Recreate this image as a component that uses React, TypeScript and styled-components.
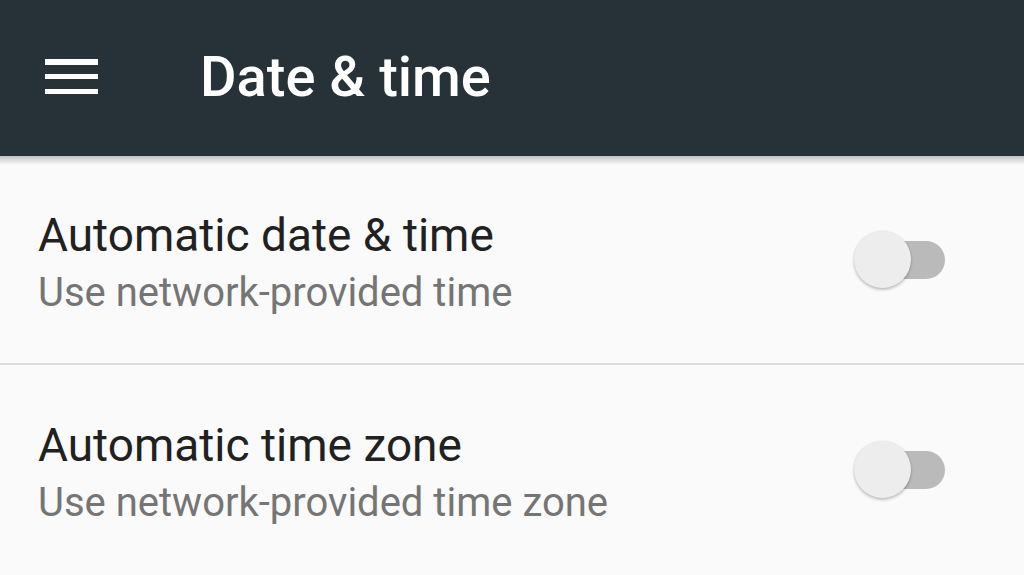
import React from "react";
import styled, { createGlobalStyle } from "styled-components";

const Global = createGlobalStyle`
  html, body { margin: 0; padding: 0; background: #fafafa; }
  body { font-family: Roboto, "Noto Sans", sans-serif; width: 1024px; height: 575px; overflow: hidden; }
`;

const Page = styled.div`
  width: 1024px;
  height: 575px;
  display: flex;
  flex-direction: column;
  background: #fafafa;
`;

const Toolbar = styled.header`
  position: relative;
  height: 156px;
  flex: none;
  background: #263238;
  display: flex;
  align-items: center;
  padding-left: 45px;
  box-sizing: border-box;
  &::after {
    content: "";
    position: absolute;
    left: 0;
    right: 0;
    top: 100%;
    height: 9px;
    background: linear-gradient(rgba(0, 0, 0, 0.22), rgba(0, 0, 0, 0));
  }
`;

const MenuButton = styled.div`
  width: 53px;
  height: 35px;
  display: flex;
  flex-direction: column;
  justify-content: space-between;
  margin-top: -3px;
  span {
    display: block;
    height: 5.5px;
    background: #ffffff;
  }
`;

const Title = styled.h1`
  margin: -2px 0 0 102px;
  color: #ffffff;
  font-family: Roboto, sans-serif;
  font-weight: 500;
  font-size: 56px;
  line-height: 1;
`;

const Row = styled.div<{ $divider?: boolean }>`
  height: 209px;
  flex: none;
  box-sizing: border-box;
  display: flex;
  align-items: center;
  justify-content: space-between;
  padding: 0 79px 0 38px;
  border-bottom: ${(p) => (p.$divider ? "2px solid #dcdcdc" : "none")};
`;

const TextBlock = styled.div`
  display: flex;
  flex-direction: column;
  padding-top: 9px;
`;

const RowTitle = styled.div`
  font-size: 46px;
  line-height: 58px;
  color: #212121;
`;

const RowSub = styled.div`
  font-size: 40px;
  line-height: 58px;
  color: #757575;
`;

const Switch = styled.div`
  position: relative;
  width: 75px;
  height: 38px;
  border-radius: 19px;
  background: #bababa;
`;

const Thumb = styled.div`
  position: absolute;
  left: -16px;
  top: 50%;
  width: 57px;
  height: 57px;
  margin-top: -28.5px;
  border-radius: 50%;
  background: #ededed;
  box-shadow: 0 2px 3px rgba(0, 0, 0, 0.22), 0 0 2px rgba(0, 0, 0, 0.1);
`;

const items = [
  { title: "Automatic date & time", sub: "Use network-provided time" },
  { title: "Automatic time zone", sub: "Use network-provided time zone" },
];

export default function App() {
  return (
    <Page>
      <Global />
      <Toolbar>
        <MenuButton>
          <span />
          <span />
          <span />
        </MenuButton>
        <Title>Date &amp; time</Title>
      </Toolbar>
      {items.map((it, i) => (
        <Row key={it.title} $divider={i === 0}>
          <TextBlock>
            <RowTitle>{it.title}</RowTitle>
            <RowSub>{it.sub}</RowSub>
          </TextBlock>
          <Switch>
            <Thumb />
          </Switch>
        </Row>
      ))}
    </Page>
  );
}
